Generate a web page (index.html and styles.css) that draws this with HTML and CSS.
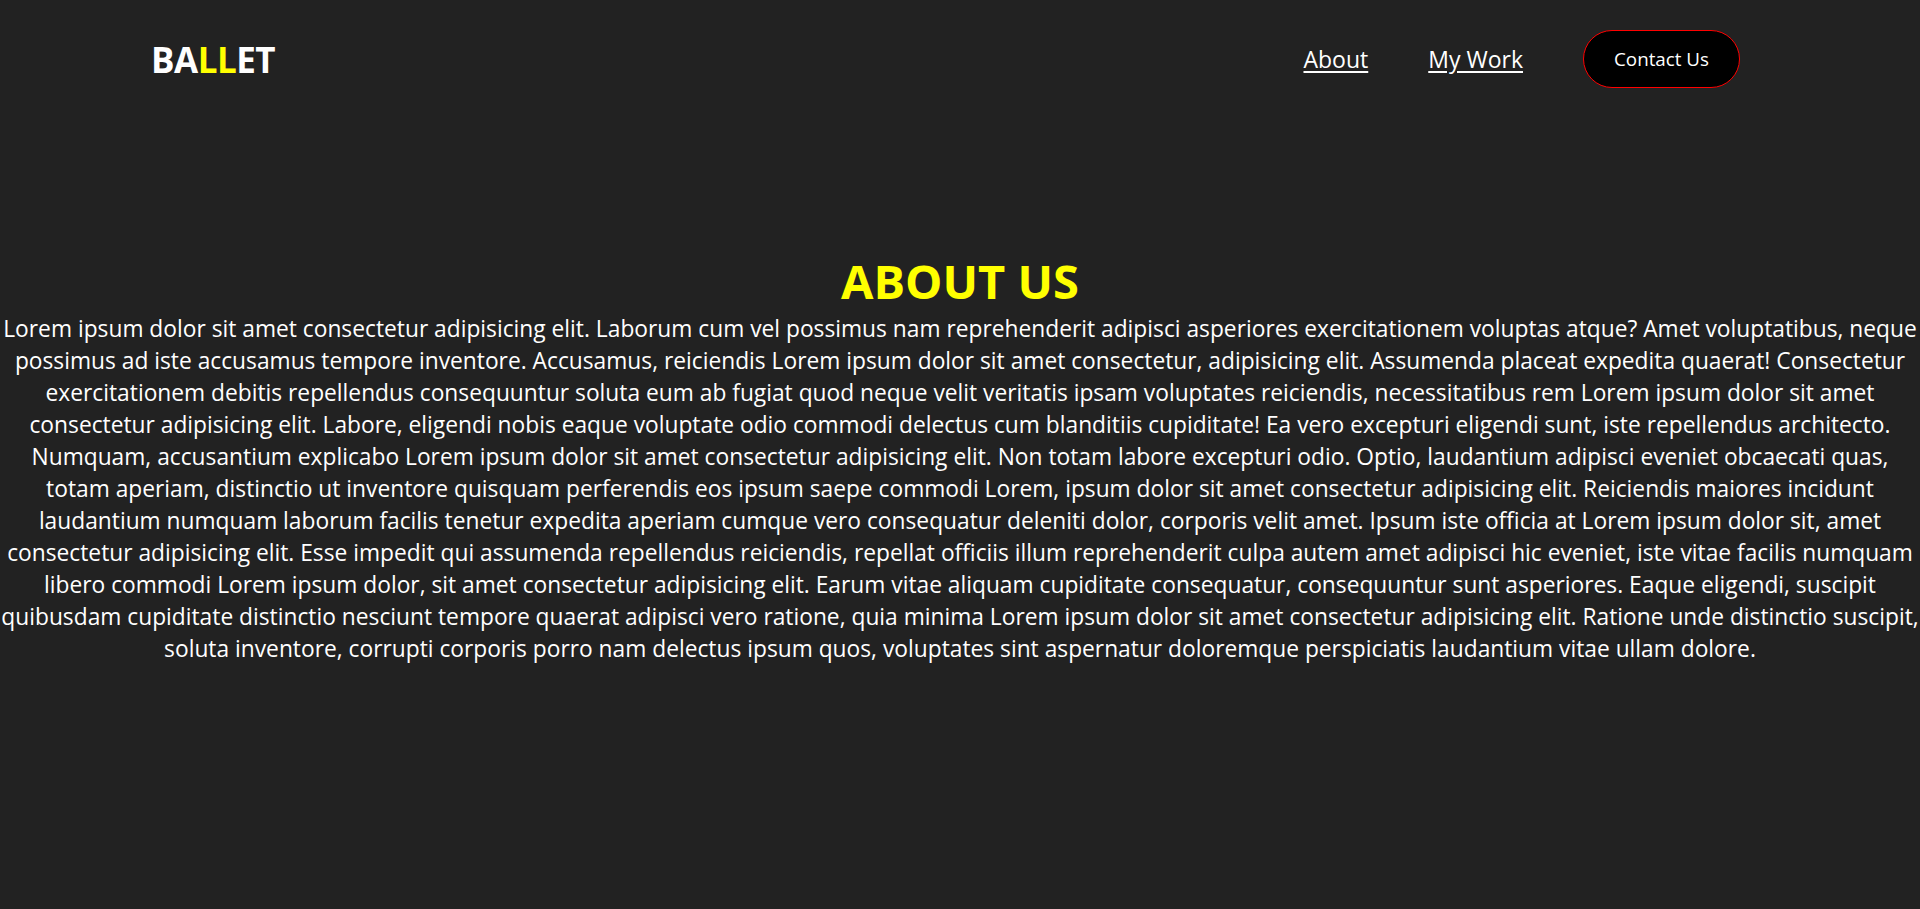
FILE: index.html
```html
<!DOCTYPE html>
<html lang="en">
<head>
<meta charset="utf-8">
<title>Ballet</title>
<link rel="stylesheet" href="styles.css">
</head>
<body>
<header class="site-header">
  <div class="logo">BA<span class="logo-accent">LL</span>ET</div>
  <nav class="nav">
    <a class="nav-link" href="#about">About</a>
    <a class="nav-link" href="#work">My Work</a>
    <a class="contact-btn" href="#contact">Contact Us</a>
  </nav>
</header>
<main class="about" id="about">
  <h1 class="about-title">ABOUT US</h1>
  <p class="about-text">Lorem ipsum dolor sit amet consectetur adipisicing elit. Laborum cum vel possimus nam reprehenderit adipisci asperiores exercitationem voluptas atque? Amet voluptatibus, neque possimus ad iste accusamus tempore inventore. Accusamus, reiciendis Lorem ipsum dolor sit amet consectetur, adipisicing elit. Assumenda placeat expedita quaerat! Consectetur exercitationem debitis repellendus consequuntur soluta eum ab fugiat quod neque velit veritatis ipsam voluptates reiciendis, necessitatibus rem Lorem ipsum dolor sit amet consectetur adipisicing elit. Labore, eligendi nobis eaque voluptate odio commodi delectus cum blanditiis cupiditate! Ea vero excepturi eligendi sunt, iste repellendus architecto. Numquam, accusantium explicabo Lorem ipsum dolor sit amet consectetur adipisicing elit. Non totam labore excepturi odio. Optio, laudantium adipisci eveniet obcaecati quas, totam aperiam, distinctio ut inventore quisquam perferendis eos ipsum saepe commodi Lorem, ipsum dolor sit amet consectetur adipisicing elit. Reiciendis maiores incidunt laudantium numquam laborum facilis tenetur expedita aperiam cumque vero consequatur deleniti dolor, corporis velit amet. Ipsum iste officia at Lorem ipsum dolor sit, amet consectetur adipisicing elit. Esse impedit qui assumenda repellendus reiciendis, repellat officiis illum reprehenderit culpa autem amet adipisci hic eveniet, iste vitae facilis numquam libero commodi Lorem ipsum dolor, sit amet consectetur adipisicing elit. Earum vitae aliquam cupiditate consequatur, consequuntur sunt asperiores. Eaque eligendi, suscipit quibusdam cupiditate distinctio nesciunt tempore quaerat adipisci vero ratione, quia minima Lorem ipsum dolor sit amet consectetur adipisicing elit. Ratione unde distinctio suscipit, soluta inventore, corrupti corporis porro nam delectus ipsum quos, voluptates sint aspernatur doloremque perspiciatis laudantium vitae ullam dolore.</p>
</main>
</body>
</html>
```
FILE: styles.css
```css
* { box-sizing: border-box; }

html, body {
  margin: 0;
  padding: 0;
}

body {
  background: #222222;
  color: #ffffff;
  font-family: "Open Sans", "Noto Sans", sans-serif;
  min-height: 909px;
}

.site-header {
  display: flex;
  justify-content: space-between;
  align-items: center;
  padding: 30px 180px 0 151px;
}

.logo {
  font-size: 35px;
  font-weight: 700;
  color: #ffffff;
  letter-spacing: -0.5px;
}

.logo-accent {
  color: #ffff00;
}

.nav {
  display: flex;
  align-items: center;
  gap: 60px;
}

.nav-link {
  color: #ffffff;
  font-size: 23px;
  text-decoration: underline;
  text-underline-offset: 3px;
}

.contact-btn {
  display: inline-block;
  background: #000000;
  color: #ffffff;
  border: 1px solid #ff0000;
  border-radius: 30px;
  padding: 15px 30px;
  font-size: 18.8px;
  line-height: 26px;
  text-decoration: none;
}

.about {
  margin-top: 161px;
  text-align: center;
}

.about-title {
  margin: 0;
  font-size: 47px;
  font-weight: 700;
  line-height: 64px;
  color: #ffff00;
}

.about-text {
  margin: 0;
  font-size: 22.78px;
  line-height: 32px;
  color: #ffffff;
}
```
